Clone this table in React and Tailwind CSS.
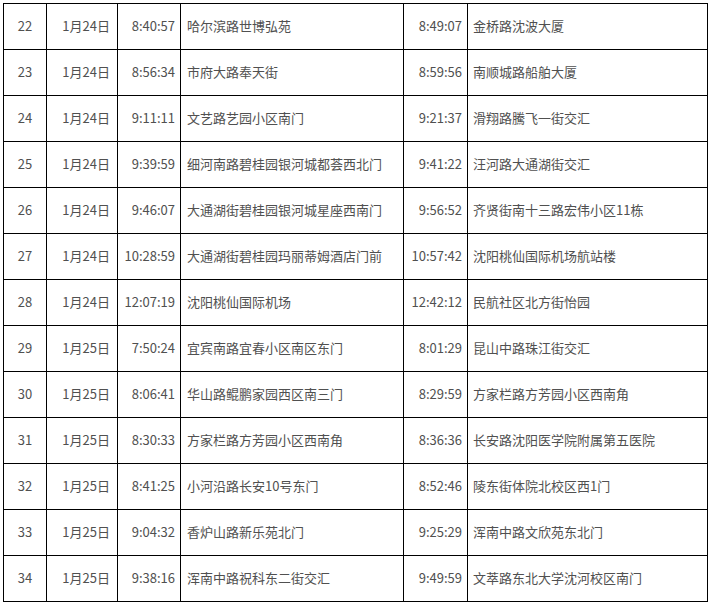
const rows = [
  ["22", "1月24日", "8:40:57", "哈尔滨路世博弘苑", "8:49:07", "金桥路沈波大厦"],
  ["23", "1月24日", "8:56:34", "市府大路奉天街", "8:59:56", "南顺城路船舶大厦"],
  ["24", "1月24日", "9:11:11", "文艺路艺园小区南门", "9:21:37", "滑翔路騰飞一街交汇"],
  ["25", "1月24日", "9:39:59", "细河南路碧桂园银河城都荟西北门", "9:41:22", "汪河路大通湖街交汇"],
  ["26", "1月24日", "9:46:07", "大通湖街碧桂园银河城星座西南门", "9:56:52", "齐贤街南十三路宏伟小区11栋"],
  ["27", "1月24日", "10:28:59", "大通湖街碧桂园玛丽蒂姆酒店门前", "10:57:42", "沈阳桃仙国际机场航站楼"],
  ["28", "1月24日", "12:07:19", "沈阳桃仙国际机场", "12:42:12", "民航社区北方街怡园"],
  ["29", "1月25日", "7:50:24", "宜宾南路宜春小区南区东门", "8:01:29", "昆山中路珠江街交汇"],
  ["30", "1月25日", "8:06:41", "华山路鲲鹏家园西区南三门", "8:29:59", "方家栏路方芳园小区西南角"],
  ["31", "1月25日", "8:30:33", "方家栏路方芳园小区西南角", "8:36:36", "长安路沈阳医学院附属第五医院"],
  ["32", "1月25日", "8:41:25", "小河沿路长安10号东门", "8:52:46", "陵东街体院北校区西1门"],
  ["33", "1月25日", "9:04:32", "香炉山路新乐苑北门", "9:25:29", "浑南中路文欣苑东北门"],
  ["34", "1月25日", "9:38:16", "浑南中路祝科东二街交汇", "9:49:59", "文萃路东北大学沈河校区南门"],
];

export default function App() {
  return (
    <div
      className="w-[712px] h-[604px] bg-white overflow-hidden pl-[3px] pt-[3px] text-[13px] text-[#505050]"
      style={{ fontFamily: '"Noto Sans CJK SC", "Liberation Sans", sans-serif' }}
    >
      <table className="table-fixed border-collapse w-[704px]">
        <colgroup>
          <col className="w-[43px]" />
          <col className="w-[71px]" />
          <col className="w-[63px]" />
          <col className="w-[223px]" />
          <col className="w-[64px]" />
          <col className="w-[240px]" />
        </colgroup>
        <tbody>
          {rows.map((r) => (
            <tr key={r[0]} className="h-[46px]">
              <td className="border border-black text-center pb-[2px]">{r[0]}</td>
              <td className="border border-black text-right pr-[7px] pb-[2px]">{r[1]}</td>
              <td className="border border-black text-right pr-[5px] pb-[2px]">{r[2]}</td>
              <td className="border border-black text-left pl-[6px] pb-[2px] whitespace-nowrap">{r[3]}</td>
              <td className="border border-black text-right pr-[5px] pb-[2px]">{r[4]}</td>
              <td className="border border-black text-left pl-[5px] pb-[2px] whitespace-nowrap">{r[5]}</td>
            </tr>
          ))}
        </tbody>
      </table>
    </div>
  );
}
